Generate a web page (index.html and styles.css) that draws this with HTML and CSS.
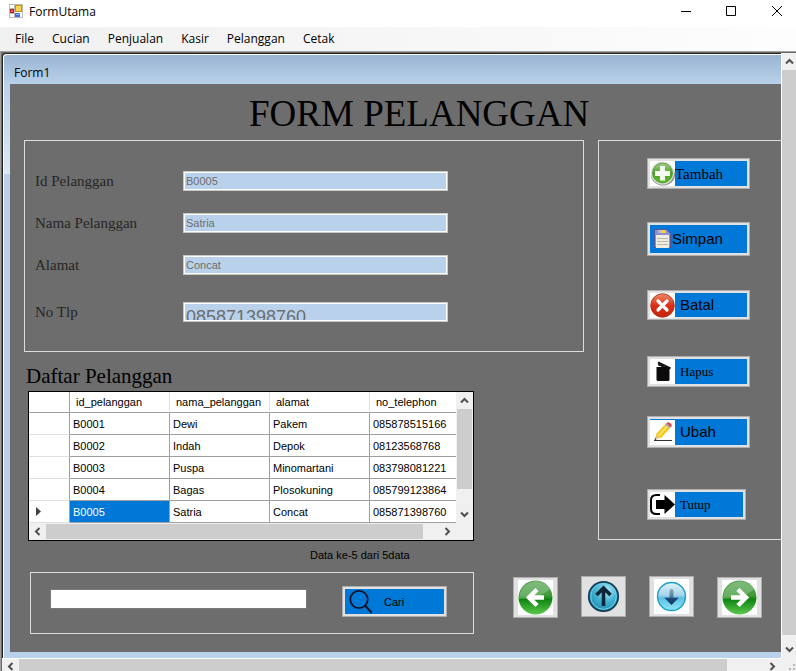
FILE: index.html
```html
<!DOCTYPE html>
<html lang="id">
<head>
<meta charset="utf-8">
<title>FormUtama</title>
<link rel="stylesheet" href="styles.css">
</head>
<body>
<svg class="defs" aria-hidden="true">
  <defs>
    <linearGradient id="green" x1="0" y1="0" x2="0" y2="1"><stop offset="0" stop-color="#5fa85c"/><stop offset=".45" stop-color="#3f9a38"/><stop offset=".55" stop-color="#0d8410"/><stop offset="1" stop-color="#5cc94e"/></linearGradient>
    <linearGradient id="plus" x1="0" y1="0" x2="0" y2="1"><stop offset="0" stop-color="#a5d08a"/><stop offset=".5" stop-color="#4fa028"/><stop offset="1" stop-color="#5fbf22"/></linearGradient>
    <linearGradient id="red" x1="0" y1="0" x2="0" y2="1"><stop offset="0" stop-color="#ee8a6c"/><stop offset=".5" stop-color="#d83216"/><stop offset="1" stop-color="#c42408"/></linearGradient>
    <radialGradient id="teal" cx=".6" cy=".3" r=".8"><stop offset="0" stop-color="#b9eef8"/><stop offset=".45" stop-color="#45b4d4"/><stop offset="1" stop-color="#137fa6"/></radialGradient>
    <linearGradient id="sky" x1="0" y1="0" x2="0" y2="1"><stop offset="0" stop-color="#e3f3fa"/><stop offset=".45" stop-color="#a5d5ea"/><stop offset=".55" stop-color="#5cc0e2"/><stop offset="1" stop-color="#8fe6f8"/></linearGradient>
    <linearGradient id="down" gradientUnits="userSpaceOnUse" x1="0" y1="10" x2="0" y2="26"><stop offset="0" stop-color="#8fa9bf"/><stop offset=".5" stop-color="#54799b"/><stop offset=".6" stop-color="#1c4674"/><stop offset="1" stop-color="#123a68"/></linearGradient>
    <symbol id="chev-up" viewBox="0 0 9 9"><path d="M1 6.5 4.5 3 8 6.5" fill="none" stroke="#505050" stroke-width="2"/></symbol>
    <symbol id="chev-down" viewBox="0 0 9 9"><path d="M1 2.5 4.5 6 8 2.5" fill="none" stroke="#505050" stroke-width="2"/></symbol>
    <symbol id="chev-left" viewBox="0 0 9 9"><path d="M6.5 1 3 4.5 6.5 8" fill="none" stroke="#505050" stroke-width="2"/></symbol>
    <symbol id="chev-right" viewBox="0 0 9 9"><path d="M2.5 1 6 4.5 2.5 8" fill="none" stroke="#505050" stroke-width="2"/></symbol>
  </defs>
</svg>

<header class="titlebar">
  <svg class="app-icon" viewBox="0 0 14 14" aria-hidden="true">
    <rect width="14" height="14" fill="#b9bcc0"/><path d="M1 1h4v3H1zM1 10h4v3H1zM6 8h7v5H6z" fill="#fff"/>
    <rect x="1" y="5" width="4" height="4" fill="#b3221c"/><rect x="2" y="6" width="2" height="2" fill="#e5665c"/>
    <rect x="6" y="1" width="7" height="7" fill="#d08f08"/><rect x="7" y="2" width="5" height="5" fill="#fbd552"/>
    <rect x="6" y="9" width="5" height="4" fill="#3b73d1"/><rect x="7" y="10" width="4" height="1" fill="#86aef0"/>
  </svg>
  <span class="app-name">FormUtama</span>
  <div class="caption">
    <button type="button" aria-label="Minimize"><svg viewBox="0 0 10 10"><path d="M0 5.5h10" stroke="#000"/></svg></button>
    <button type="button" aria-label="Maximize"><svg viewBox="0 0 10 10"><path d="M.5.5h9v9h-9z" stroke="#000" fill="none"/></svg></button>
    <button type="button" aria-label="Close"><svg viewBox="0 0 10 10"><path d="M0 0 10 10M10 0 0 10" stroke="#000"/></svg></button>
  </div>
</header>

<nav class="menu">
  <a href="#file">File</a><a href="#cucian">Cucian</a><a href="#penjualan">Penjualan</a><a href="#kasir">Kasir</a><a href="#pelanggan">Pelanggan</a><a href="#cetak">Cetak</a>
</nav>

<main class="mdi">
  <section class="child">
    <div class="child-title">Form1</div>
    <div class="form">
      <h1>FORM PELANGGAN</h1>
      <div class="columns">
        <div class="left">
          <div class="panel fields">
            <label for="id">Id Pelanggan</label><input id="id" value="B0005">
            <label for="nama">Nama Pelanggan</label><input id="nama" value="Satria">
            <label for="alamat">Alamat</label><input id="alamat" value="Concat">
            <label for="tlp" class="spaced">No Tlp</label><input id="tlp" class="spaced large" value="085871398760">
          </div>
          <h2>Daftar Pelanggan</h2>
          <div class="grid">
            <div class="grid-view">
              <table>
                <colgroup><col class="col-head"><col class="col"><col class="col"><col class="col"><col></colgroup>
                <thead><tr><th></th><th>id_pelanggan</th><th>nama_pelanggan</th><th>alamat</th><th>no_telephon</th></tr></thead>
                <tbody>
                  <tr><th></th><td>B0001</td><td>Dewi</td><td>Pakem</td><td>085878515166</td></tr>
                  <tr><th></th><td>B0002</td><td>Indah</td><td>Depok</td><td>08123568768</td></tr>
                  <tr><th></th><td>B0003</td><td>Puspa</td><td>Minomartani</td><td>083798081221</td></tr>
                  <tr><th></th><td>B0004</td><td>Bagas</td><td>Plosokuning</td><td>085799123864</td></tr>
                  <tr><th><svg class="marker" viewBox="0 0 5 9"><path d="M0 0v9l5-4.5z" fill="#404040"/></svg></th><td class="selected">B0005</td><td>Satria</td><td>Concat</td><td>085871398760</td></tr>
                </tbody>
              </table>
            </div>
            <div class="bar vertical">
              <button type="button" aria-label="Baris atas"><svg><use href="#chev-up"/></svg></button>
              <div class="track"><div class="thumb rows"></div></div>
              <button type="button" aria-label="Baris bawah"><svg><use href="#chev-down"/></svg></button>
            </div>
            <div class="bar horizontal">
              <button type="button" aria-label="Kolom kiri"><svg><use href="#chev-left"/></svg></button>
              <div class="track"><div class="thumb cols"></div></div>
              <button type="button" aria-label="Kolom kanan"><svg><use href="#chev-right"/></svg></button>
            </div>
          </div>
        </div>
        <div class="panel actions">
          <button type="button" class="action serif first">
            <svg class="pic" viewBox="0 0 25 25"><rect width="25" height="25" fill="#fff"/><ellipse cx="13" cy="14" rx="12" ry="10.5" fill="#8f968f"/><circle cx="12.5" cy="12" r="11.5" fill="#dfe4dc"/><circle cx="12.5" cy="12" r="10" fill="url(#plus)" stroke="#4a8f38" stroke-width=".8"/><path d="M10 5h5v5h5v5h-5v4.500h-5V15H5v-5h5z" fill="#f4faf0"/></svg>
            <span>Tambah</span></button>
          <button type="button" class="action tall">
            <svg class="pic" viewBox="0 0 22 25"><path d="M4.500 2.500h12l4 4v14h-16z" fill="#8f8fd0" stroke="#55559c"/><path d="M6 8h13v13H6z" fill="#efede2"/><path d="M8 3h8v3H8z" fill="#b9b9d4"/><path d="M11 3h4v3h-4z" fill="#f6d33c"/><path d="M7 11.500h11M7 14.500h11M7 17.500h11" stroke="#b8b8ac"/></svg>
            <span>Simpan</span></button>
          <button type="button" class="action short indent">
            <svg class="pic" viewBox="0 0 25 25"><rect width="25" height="25" fill="#fff"/><circle cx="12.500" cy="12.500" r="11.800" fill="url(#red)" stroke="#a82a18" stroke-width=".8"/><path d="M8 8l9 9M17 8l-9 9" stroke="#fff" stroke-width="3.200" stroke-linecap="round"/></svg>
            <span>Batal</span></button>
          <button type="button" class="action serif small indent">
            <svg class="pic" viewBox="0 0 25 25"><rect width="25" height="25" fill="#fff"/><path d="M6.500 8h13v12.500q0 1.500-1.500 1.500H8q-1.500 0-1.500-1.500z" fill="#0a0a0a"/><path d="M8 3.500 20.500 9.500" stroke="#111" stroke-width="2"/><path d="M8.500 6.500q2-2 5 2" stroke="#111" stroke-width="2" fill="none"/></svg>
            <span>Hapus</span></button>
          <button type="button" class="action indent">
            <svg class="pic" viewBox="0 0 25 25"><rect width="25" height="25" fill="#fff"/><path d="M4 20.500h18" stroke="#333"/><path d="M4.500 20 6.500 14 9.500 18z" fill="#e5c595"/><path d="M6.500 13.500 15 4.500l4.500 4-8.500 9.500-4.500-1z" fill="#f4c91e"/><path d="M8.500 16 17 6.500" stroke="#fbe778" stroke-width="1.400"/><path d="m15 4.500 1.200-1.300 4.500 4-1.200 1.300z" fill="#9ba4a8"/><path d="M16.200 3.200q1.800-2 4.300.1 2.400 2 .4 4z" fill="#d64b50"/><path d="m4.500 20 .8-2.200 1.200 1.600z" fill="#333"/></svg>
            <span>Ubah</span></button>
          <button type="button" class="action serif small indent narrow">
            <svg class="pic" viewBox="0 0 25 25"><rect width="25" height="25" fill="#fff"/><path d="M10 3H6.500Q1 3 1 8v9q0 5 5.500 5H10" fill="none" stroke="#000" stroke-width="2"/><path d="M6 8h8.500V3L25 12.500 14.500 22v-5H6z" fill="#000"/></svg>
            <span>Tutup</span></button>
        </div>
      </div>
      <p class="status">Data ke-5 dari 5data</p>
      <div class="footer">
        <div class="panel search">
          <input type="text" aria-label="Cari pelanggan">
          <button type="button" class="action find">
            <svg class="pic" viewBox="0 0 25 25"><circle cx="12" cy="10.500" r="8.700" fill="none" stroke="#141428" stroke-width="1.800"/><path d="M18 16.500 25 24" stroke="#141428" stroke-width="2.200"/></svg>
            <span>Cari</span></button>
        </div>
        <div class="steps">
          <button type="button" class="step lower" aria-label="Sebelumnya"><svg viewBox="0 0 35 35"><rect width="35" height="35" fill="#fff"/><circle cx="17.500" cy="17.500" r="17" fill="url(#green)"/><path d="M1 19A17 17 0 0 1 32 9Q24 17 1 19z" fill="#fff" opacity=".22"/><path d="M19 9.500 11 17.500l8 8M11.500 17.500H26" fill="none" stroke="#fff" stroke-width="4.500"/></svg></button>
          <button type="button" class="step" aria-label="Pertama"><svg viewBox="0 0 35 35"><circle cx="17.500" cy="17.500" r="14.700" fill="url(#teal)" stroke="#123f55" stroke-width="1.800"/><circle cx="17.500" cy="17.500" r="12.800" fill="none" stroke="#75d0e6" stroke-width="1"/><path d="M17.500 27V10M10.500 16l7-7 7 7" fill="none" stroke="#0b2638" stroke-width="3.600"/></svg></button>
          <button type="button" class="step" aria-label="Terakhir"><svg viewBox="0 0 35 35"><rect width="35" height="35" fill="#fff"/><circle cx="17.500" cy="17.500" r="14" fill="url(#sky)" stroke="#1ba0c8" stroke-width="1.400"/><path d="M15.500 12q0-2 2-2t2 2v6.500h5.500L17.500 26 10 18.500h5.500z" fill="url(#down)"/></svg></button>
          <button type="button" class="step lower" aria-label="Berikutnya"><svg viewBox="0 0 35 35"><rect width="35" height="35" fill="#fff"/><circle cx="17.500" cy="17.500" r="17" fill="url(#green)"/><path d="M1 19A17 17 0 0 1 32 9Q24 17 1 19z" fill="#fff" opacity=".22"/><path d="M16 9.500 24 17.500l-8 8M23.500 17.500H9" fill="none" stroke="#fff" stroke-width="4.500"/></svg></button>
        </div>
      </div>
    </div>
  </section>
  <div class="bar vertical outer">
    <button type="button" aria-label="Gulir atas"><svg><use href="#chev-up"/></svg></button>
    <div class="track"><div class="thumb page-y"></div></div>
    <button type="button" aria-label="Gulir bawah"><svg><use href="#chev-down"/></svg></button>
  </div>
  <div class="bar horizontal outer">
    <button type="button" aria-label="Gulir kiri"><svg><use href="#chev-left"/></svg></button>
    <div class="track"><div class="thumb page-x"></div></div>
    <button type="button" aria-label="Gulir kanan"><svg><use href="#chev-right"/></svg></button>
  </div>
  <div class="grip"><svg viewBox="0 0 15 13"><path d="M12 6h2v2h-2zM8 10h2v2H8zM12 10h2v2h-2z" fill="#b8b8b8"/></svg></div>
</main>
</body>
</html>
```
FILE: styles.css
```css
* { box-sizing: border-box; }
body {
  margin: 0;
  height: 100vh;
  display: flex;
  flex-direction: column;
  overflow: hidden;
  background: #fff;
  color: #000;
  font: 12px/16px "Open Sans", "Noto Sans", sans-serif;
}
h1, h2, p { margin: 0; font-weight: normal; }
button { font: inherit; color: inherit; padding: 0; border: 0; background: none; }
svg { display: block; }
.defs { position: absolute; width: 0; height: 0; }

.titlebar { display: flex; height: 27px; flex: none; padding-left: 9px; }
.app-icon { width: 14px; height: 14px; margin-top: 4px; }
.app-name { margin: 4px 0 0 6px; }
.caption { display: flex; margin-left: auto; }
.caption button { width: 45px; height: 22px; display: grid; place-items: center; }
.caption button:last-child { width: 43px; padding-left: 5px; }
.caption svg { width: 10px; height: 10px; }

.menu {
  display: flex;
  flex: none;
  gap: 18px;
  height: 24px;
  padding: 4px 15px;
  background: linear-gradient(to right, #f0f0f0, #fdfdfd);
}
.menu a { color: inherit; text-decoration: none; }

.mdi {
  flex: 1;
  min-height: 0;
  display: grid;
  grid-template: minmax(0, 1fr) 13px / minmax(0, 1fr) 15px;
  padding: 1px 0 0 1px;
  border: 1px solid #a0a0a0;
  border-width: 1px 0 0 1px;
  background: #696969;
}
.child {
  min-width: 0;
  display: flex;
  flex-direction: column;
  padding: 0 0 6px 7px;
  border: 1px solid #222;
  border-width: 1px 0 0 1px;
  border-top-left-radius: 4px;
  box-shadow: inset 1px 1px #fff;
  background: linear-gradient(to bottom, #99b4d1, #b9d1ea 30px, #dce8f4 120px, #b9d1ea 120px);
}
.child-title { height: 30px; flex: none; padding: 11px 4px 0; }
.form { flex: 1; min-height: 0; padding-left: 14px; background: #6d6d6d; }

h1 {
  height: 56px;
  padding-left: 225px;
  font: 37px/60px "Liberation Serif", serif;
  white-space: nowrap;
}
.columns { display: flex; gap: 14px; }
.left { flex: 1; min-width: 0; }
.panel { border: 1px solid #dcdcdc; }

.fields {
  display: grid;
  grid-template-columns: 148px minmax(0, 265px);
  row-gap: 22px;
  align-content: start;
  height: 212px;
  padding: 30px 10px;
}
.fields label { font: 15px/20px "Liberation Serif", serif; color: #262626; }
.fields input {
  width: 100%;
  height: 20px;
  padding: 0 2px;
  border: 1px solid #c8c8c8;
  outline: 1px solid #fff;
  outline-offset: -2px;
  background: #b9d1ea;
  color: #6d6d6d;
  font: 11px/18px "Liberation Sans", sans-serif;
}
.fields .spaced { margin-top: 5px; }
.fields .large { font-size: 18px; padding-top: 10px; }

h2 { height: 39px; padding: 12px 2px 0; font: 21px/24px "Liberation Serif", serif; }

.grid {
  display: grid;
  grid-template: auto 17px / minmax(0, 1fr) 17px;
  margin: 0 110px 0 4px;
  border: 1px solid #000;
  background: #f0f0f0;
  font: 11px/14px "Liberation Sans", sans-serif;
}
.grid-view { overflow: hidden; background: #fff; }
table { width: 100%; table-layout: fixed; border-spacing: 0; }
.col-head { width: 41px; }
.col { width: 100px; }
th, td {
  height: 22px;
  padding: 0 3px;
  border-right: 1px solid #a0a0a0;
  border-bottom: 1px solid #a0a0a0;
  font-weight: normal;
  text-align: left;
  white-space: nowrap;
}
thead th { height: 21px; padding-left: 6px; border-right-color: #e0e0e0; }
th:first-child { border-right-color: #a0a0a0; }
tbody th { border-bottom-color: #e0e0e0; }
tr > :last-child { border-right: 0; }
.selected { background: #0078d7; color: #fff; }
.marker { width: 5px; height: 9px; margin-left: 4px; }

.bar { display: flex; background: #f0f0f0; overflow: hidden; }
.bar button { flex: none; width: 17px; height: 17px; display: grid; place-items: center; }
.bar svg { width: 9px; height: 9px; }
.track { flex: 1; min-width: 0; min-height: 0; }
.thumb { background: #cdcdcd; }
.vertical { flex-direction: column; padding: 0 1px; }
.vertical button { width: 15px; }
.horizontal { padding: 1px 0; }
.horizontal button { height: 15px; }
.horizontal .thumb { height: 100%; }
.rows { height: 82%; }
.cols { width: 96%; }
.outer { border: 0 solid #fff; padding: 0; }
.outer.vertical { border-left-width: 1px; }
.outer.horizontal { border-top-width: 1px; }
.page-y { height: 99%; }
.page-x { width: 95%; }
.grip { background: #f0f0f0; }
.grip svg { width: 15px; height: 13px; }

.actions {
  flex: none;
  width: 183px;
  height: 400px;
  padding: 17px 0 0 48px;
  border-right: 0;
}
.action {
  display: flex;
  align-items: center;
  width: 103px;
  height: 31px;
  border: 1px solid #adadad;
  box-shadow: inset 0 0 0 2px #e1e1e1;
  padding: 2px;
  background: #0078d7;
  font: 15px/20px "Liberation Sans", sans-serif;
  text-align: left;
}
.actions .action { margin-bottom: 34px; }
.actions .first { margin-bottom: 33px; }
.pic { width: 25px; height: 25px; flex: none; }
.action.serif { font-family: "Liberation Serif", serif; }
.action.small { font-size: 13px; }
.action.indent span { margin-left: 5px; }
.action.tall { height: 34px; }
.tall .pic { width: 22px; }
.action.short { height: 30px; margin-bottom: 36px; }
.action.small { margin-bottom: 29px; }
.action.small + .action { height: 32px; margin-bottom: 41px; }
.action.narrow { width: 99px; }

.status {
  height: 31px;
  padding: 6px 0 0 286px;
  font: 11px/16px "Liberation Sans", sans-serif;
}
.footer { display: flex; gap: 39px; padding: 0 19px 0 6px; }
.search {
  flex: 1;
  min-width: 0;
  display: flex;
  justify-content: space-between;
  height: 62px;
  padding: 13px 26px 0 19px;
}
.search input {
  width: 257px;
  height: 20px;
  margin-top: 3px;
  border: 1px solid #7a7a7a;
  background: #fff;
}
.action.find { width: 105px; font-size: 11px; }
.find .pic { margin-left: 2px; }
.find span { margin-left: 12px; }
.steps { display: grid; grid-template-columns: repeat(4, 45px); gap: 23px; padding-top: 4px; align-items: start; }
.step {
  display: grid;
  place-items: center;
  height: 41px;
  border: 1px solid #adadad;
  background: #e1e1e1;
}
.step svg { width: 35px; height: 35px; }
.step.lower { margin-top: 1px; }
```
